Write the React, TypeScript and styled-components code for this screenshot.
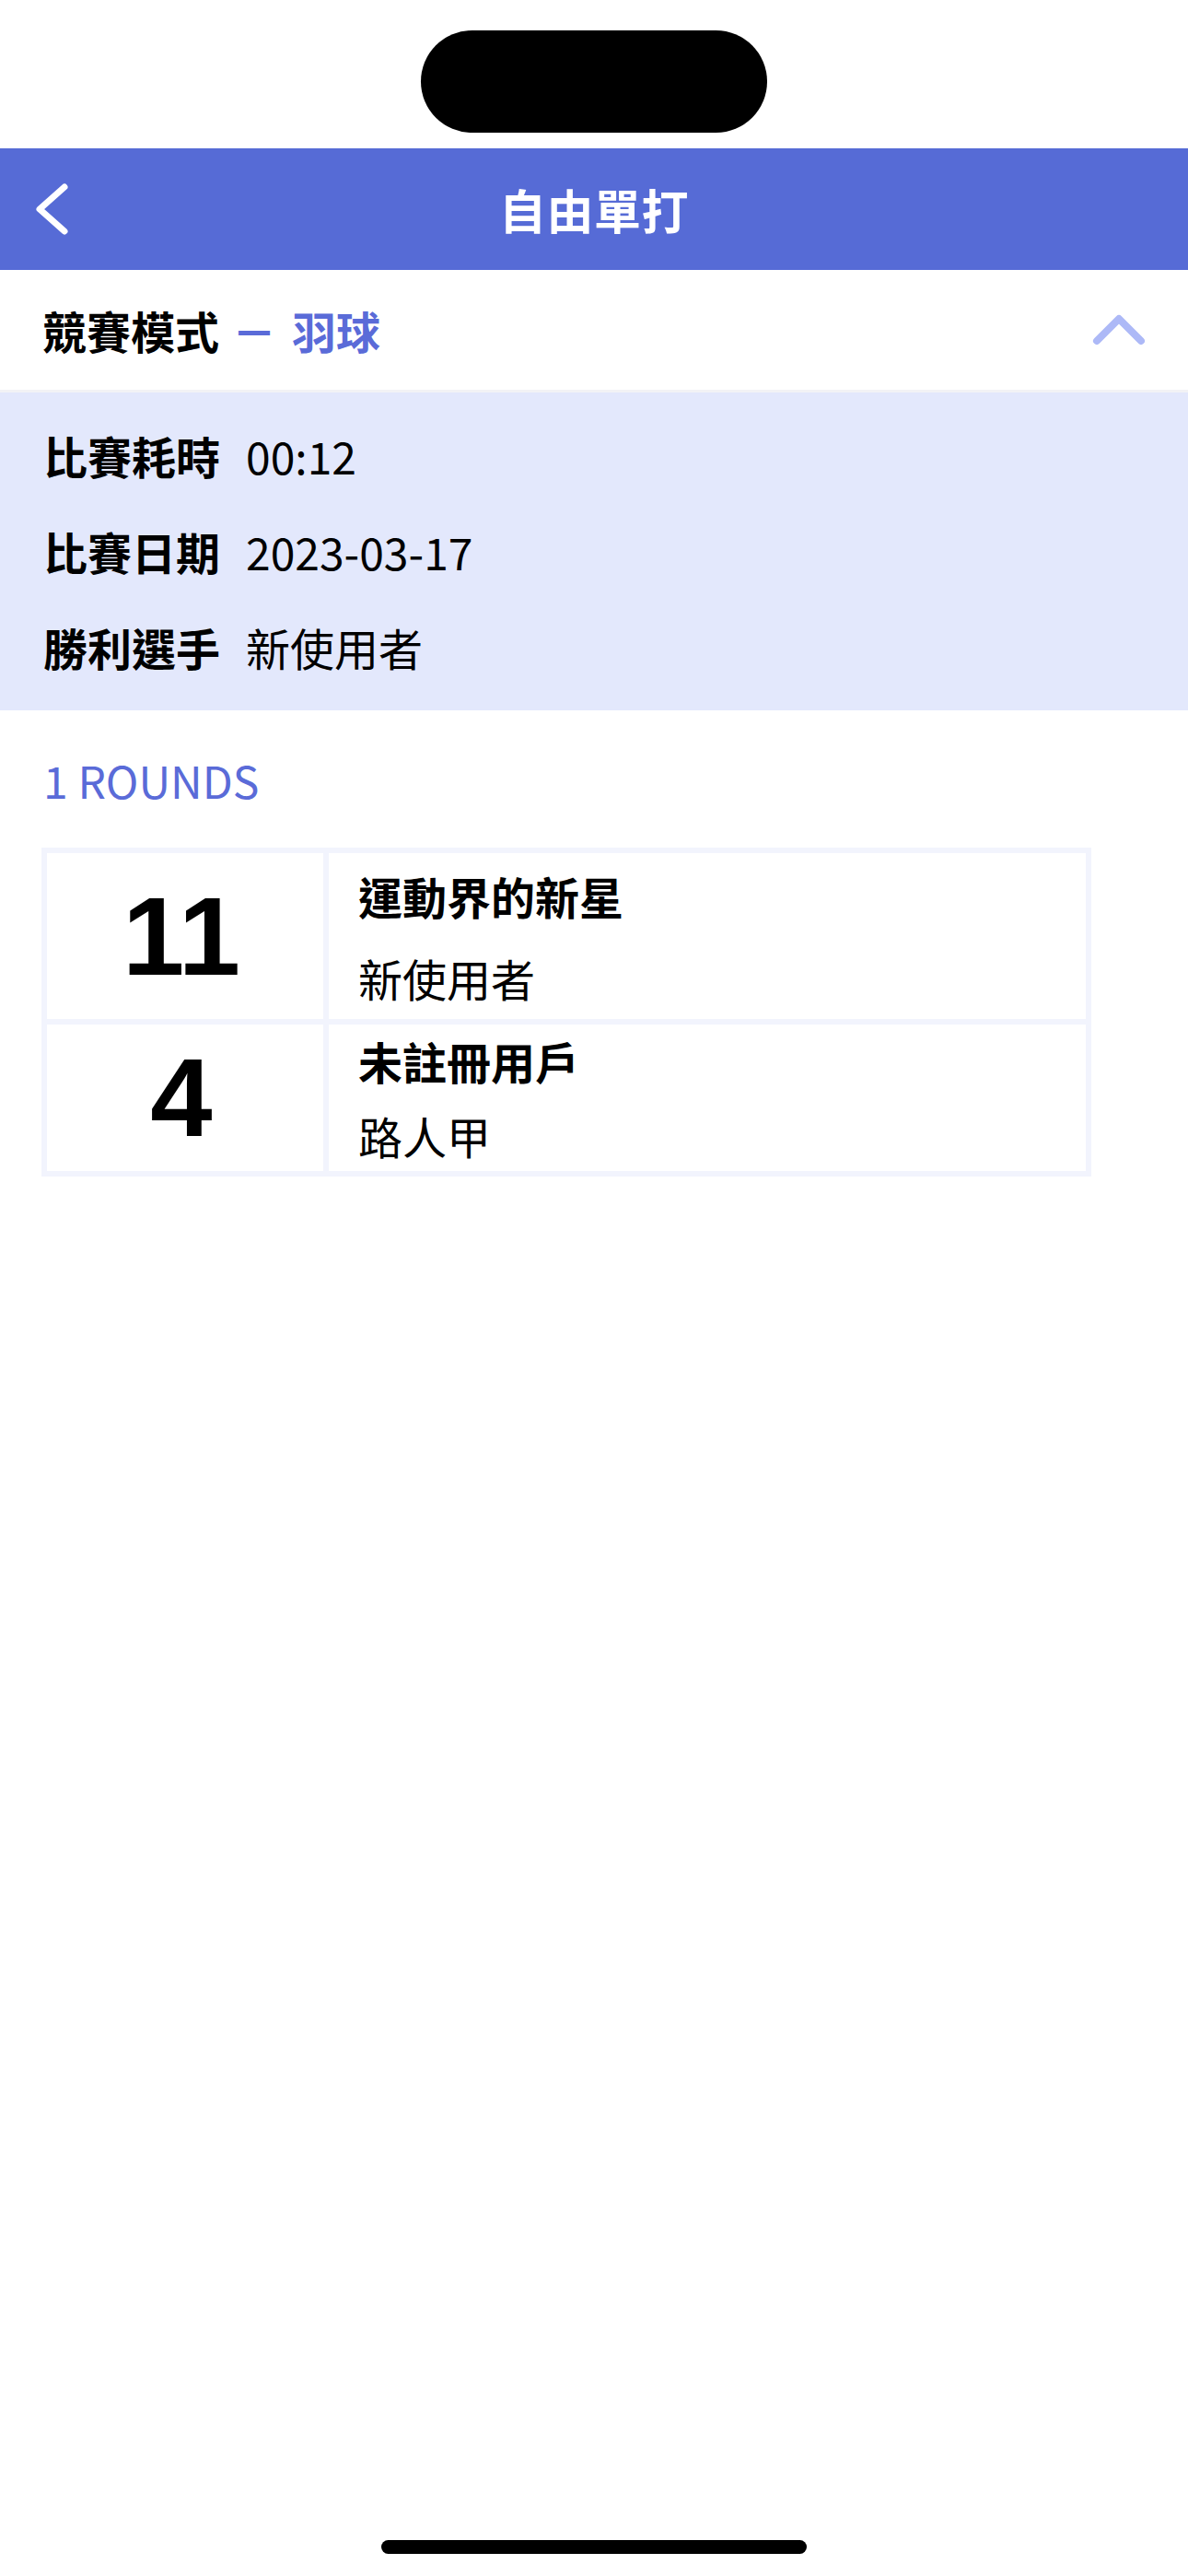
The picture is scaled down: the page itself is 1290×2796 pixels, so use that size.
import React from 'react'
import styled, { createGlobalStyle } from 'styled-components'

const GlobalStyle = createGlobalStyle`
  html, body {
    margin: 0;
    padding: 0;
    background: #ffffff;
  }
  body {
    font-family: 'Noto Sans CJK TC', 'Noto Sans', sans-serif;
    color: #000000;
  }
  * {
    box-sizing: border-box;
  }
`

const Screen = styled.div`
  position: relative;
  width: 1290px;
  min-height: 2796px;
  background: #ffffff;
`

const StatusBar = styled.div`
  height: 161px;
  display: flex;
  justify-content: center;
  padding-top: 33px;
`

const Island = styled.div`
  width: 376px;
  height: 111px;
  border-radius: 56px;
  background: #000000;
`

const NavBar = styled.header`
  height: 132px;
  background: #566bd6;
  display: grid;
  grid-template-columns: 1fr auto 1fr;
  align-items: center;
  padding: 0 37px;
`

const BackButton = styled.button`
  justify-self: start;
  background: transparent;
  border: none;
  padding: 0;
  display: flex;
  svg {
    display: block;
  }
`

const Title = styled.h1`
  margin: 0;
  font-size: 51px;
  line-height: 60px;
  font-weight: 700;
  color: #ffffff;
  letter-spacing: 0.5px;
`

const ModeRow = styled.div`
  height: 133px;
  display: flex;
  align-items: center;
  justify-content: space-between;
  padding: 0 43px 0 46px;
  border-bottom: 3px solid #f2f2f5;
`

const ModeTitle = styled.div`
  font-size: 48px;
  line-height: 60px;
  font-weight: 700;
  display: flex;
  align-items: center;
`

const Accent = styled.span`
  color: #5a6bd8;
  margin-left: 14px;
`

const Sport = styled.span`
  color: #5a6bd8;
  margin-left: 17px;
`

const Collapse = styled.button`
  background: transparent;
  border: none;
  padding: 0;
  svg {
    display: block;
  }
`

const InfoPanel = styled.section`
  background: #e3e8fc;
  padding: 16px 47px 17px;
`

const InfoRow = styled.div`
  display: flex;
  align-items: center;
  gap: 28px;
  height: 104px;
  font-size: 48px;
  line-height: 104px;
`

const Label = styled.span`
  font-weight: 700;
`

const Value = styled.span`
  font-weight: 400;
`

const RoundsHeading = styled.h2`
  margin: 0;
  padding: 45px 47px 44px;
  font-size: 48px;
  line-height: 60px;
  font-weight: 400;
  color: #5a6bd8;
`

const ScoreTable = styled.div`
  margin-left: 45px;
  width: 1140px;
  display: grid;
  grid-template-columns: 300px 1fr;
  gap: 6px;
  padding: 6px;
  background: #f2f4fd;
`

const ScoreCell = styled.div<{ $height: number }>`
  height: ${p => p.$height}px;
  background: #ffffff;
  display: flex;
  align-items: center;
  justify-content: center;
  font-family: 'Liberation Sans', Arial, sans-serif;
  font-weight: 700;
  font-size: 121px;
  line-height: 1;
  padding-right: 8px;
`

const NameCell = styled.div<{ $gap: number }>`
  background: #ffffff;
  display: flex;
  flex-direction: column;
  justify-content: center;
  gap: ${p => p.$gap}px;
  padding-left: 32px;
  font-size: 48px;
  line-height: 60px;
`

const TeamName = styled.div`
  font-weight: 700;
`

const PlayerName = styled.div`
  font-weight: 400;
`

const HomeIndicator = styled.div`
  position: absolute;
  left: 414px;
  bottom: 24px;
  width: 462px;
  height: 15px;
  border-radius: 8px;
  background: #000000;
`

const info = [
  { label: '比賽耗時', value: '00:12' },
  { label: '比賽日期', value: '2023-03-17' },
  { label: '勝利選手', value: '新使用者' },
]

const scores = [
  { score: 11, team: '運動界的新星', player: '新使用者', height: 180, gap: 29 },
  { score: 4, team: '未註冊用戶', player: '路人甲', height: 159, gap: 21 },
]

export default function App() {
  return (
    <Screen>
      <GlobalStyle />
      <StatusBar>
        <Island />
      </StatusBar>

      <NavBar>
        <BackButton aria-label="返回">
          <svg width="40" height="60" viewBox="0 0 40 60">
            <polyline
              points="33,6 6,30 33,54"
              fill="none"
              stroke="#ffffff"
              strokeWidth="7"
              strokeLinecap="round"
              strokeLinejoin="round"
            />
          </svg>
        </BackButton>
        <Title>自由單打</Title>
        <span />
      </NavBar>

      <ModeRow>
        <ModeTitle>
          競賽模式
          <Accent>－</Accent>
          <Sport>羽球</Sport>
        </ModeTitle>
        <Collapse aria-label="收起">
          <svg width="64" height="44" viewBox="0 0 64 44">
            <polyline
              points="8,34 32,10 56,34"
              fill="none"
              stroke="#adb9f7"
              strokeWidth="8"
              strokeLinecap="round"
              strokeLinejoin="round"
            />
          </svg>
        </Collapse>
      </ModeRow>

      <InfoPanel>
        {info.map(row => (
          <InfoRow key={row.label}>
            <Label>{row.label}</Label>
            <Value>{row.value}</Value>
          </InfoRow>
        ))}
      </InfoPanel>

      <RoundsHeading>1 ROUNDS</RoundsHeading>

      <ScoreTable>
        {scores.map(s => (
          <React.Fragment key={s.team}>
            <ScoreCell $height={s.height}>{s.score}</ScoreCell>
            <NameCell $gap={s.gap}>
              <TeamName>{s.team}</TeamName>
              <PlayerName>{s.player}</PlayerName>
            </NameCell>
          </React.Fragment>
        ))}
      </ScoreTable>

      <HomeIndicator />
    </Screen>
  )
}
